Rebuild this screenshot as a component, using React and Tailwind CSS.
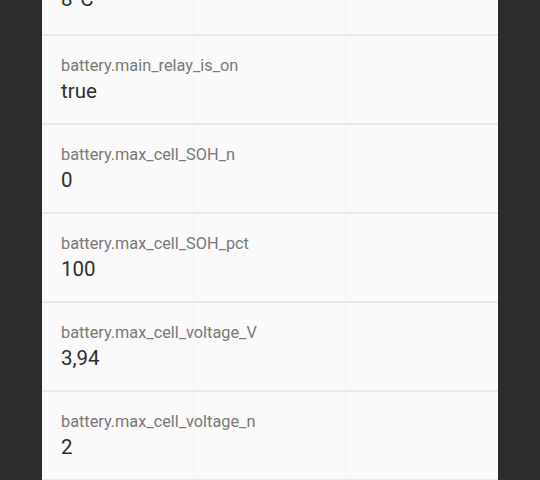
import React from "react";

const rows = [
  ["battery.main_relay_is_on", "true"],
  ["battery.max_cell_SOH_n", "0"],
  ["battery.max_cell_SOH_pct", "100"],
  ["battery.max_cell_voltage_V", "3,94"],
  ["battery.max_cell_voltage_n", "2"],
];

function Row({ label, value }) {
  return (
    <div className="h-[89px] border-b-2 border-[#e8e8e8] pl-[19px] pt-[20px] flex flex-col">
      <div className="text-[16.3px] leading-[20px] text-[#787878]">{label}</div>
      <div className="mt-[2px] text-[20.5px] leading-[26px] text-[#2e2e2e]">{value}</div>
    </div>
  );
}

export default function App() {
  return (
    <div className="w-[540px] h-[480px] bg-[#2c2c2c] overflow-hidden" style={{ fontFamily: "Roboto, 'Noto Sans', sans-serif" }}>
      <div className="ml-[42px] w-[456px] h-[480px] bg-[#fafafa] relative overflow-hidden">
        <div className="absolute inset-0 grid grid-cols-3 pointer-events-none">
          <div className="border-r border-[#f4f4f4]" />
          <div className="border-r border-[#f4f4f4]" />
          <div />
        </div>
        <div className="relative flex flex-col">
          <div className="h-[36px] border-b-2 border-[#e8e8e8] pl-[19px] flex flex-col justify-end pb-[22px] overflow-hidden">
            <div className="text-[20.5px] leading-[26px] text-[#2e2e2e] shrink-0">8°C</div>
          </div>
          {rows.map(([l, v]) => (
            <Row key={l} label={l} value={v} />
          ))}
        </div>
      </div>
    </div>
  );
}
